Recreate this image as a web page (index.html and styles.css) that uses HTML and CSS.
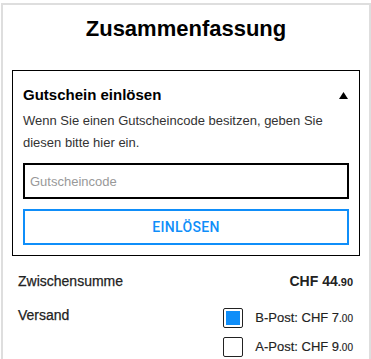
FILE: index.html
```html
<!DOCTYPE html>
<html lang="de">
<head>
    <meta charset="UTF-8">
    <title>Zusammenfassung</title>
    <link rel="stylesheet" href="styles.css">
</head>
<body>
  <!-- Warenkorb-Zusammenfassung -->
  <div class="summary">
    <h1>Zusammenfassung</h1>

    <!-- Gutschein -->
    <div class="voucher">
      <div class="voucher-head">
        <span>Gutschein einlösen</span>
        <svg class="arrow" width="9" height="7" viewBox="0 0 9 7"><polygon points="4.5,0 9,7 0,7" fill="#000"/></svg>
      </div>
      <p>Wenn Sie einen Gutscheincode besitzen, geben Sie diesen bitte hier ein.</p>
      <input type="text" placeholder="Gutscheincode">
      <button>EINLÖSEN</button>
    </div>

    <!-- Beträge -->
    <div class="row">
      <span class="label">Zwischensumme</span>
      <span class="price">CHF 44<small>.90</small></span>
    </div>

    <div class="row shipping">
      <span class="label">Versand</span>
      <div class="options">
        <label class="option">
          <span class="box checked"></span>
          <span>B-Post: CHF 7<small>.00</small></span>
        </label>
        <label class="option">
          <span class="box"></span>
          <span>A-Post: CHF 9<small>.00</small></span>
        </label>
      </div>
    </div>
  </div>
</body>
</html>
```

FILE: styles.css
```css
/* Grundlayout */
body {
    margin: 0;
    font-family: "Liberation Sans", Arial, sans-serif;
    background: #fff;
    color: #333;
}

/* Karte */
.summary {
    box-sizing: border-box;
    width: 370px;
    height: 356px;
    overflow: hidden;
    margin: 3px 0 0 1px;
    padding: 0 9px;
    border: 2px solid #dedede;
    border-bottom: none;
}

.summary h1 {
    font-size: 22px;
    line-height: 28px;
    text-align: center;
    color: #000;
    margin: 10px 0 27px;
}

/* Gutschein-Block */
.voucher {
    border: 1px solid #000;
    padding: 15px 10px 10px 10px;
}

.voucher-head {
    display: flex;
    justify-content: space-between;
    align-items: center;
    font-size: 15px;
    line-height: 18px;
    font-weight: bold;
    color: #000;
    padding-right: 1px;
}

.voucher p {
    font-size: 13px;
    line-height: 22px;
    margin: 6px 0 9px;
    color: #333;
}

.voucher input {
    display: block;
    box-sizing: border-box;
    width: 100%;
    height: 36px;
    border: 2px solid #000;
    padding: 0 5px;
    font-family: "Liberation Sans", Arial, sans-serif;
    font-size: 13px;
    outline: none;
}

.voucher input::placeholder {
    color: #999;
}

.voucher button {
    display: block;
    box-sizing: border-box;
    width: 100%;
    height: 36px;
    margin-top: 10px;
    border: 2px solid #0f8ef9;
    background: #fff;
    color: #0f8ef9;
    font-family: Roboto, sans-serif;
    font-weight: 500;
    font-size: 14px;
    letter-spacing: 0.3px;
    cursor: pointer;
}

/* Zeilen */
.row {
    display: flex;
    justify-content: space-between;
    align-items: flex-start;
    padding: 0 7px 0 6px;
    margin-top: 16px;
    font-size: 14px;
    line-height: 18px;
}

.row.shipping {
    margin-top: 15px;
}

.label {
    color: #222;
    -webkit-text-stroke: 0.25px #222;
}

.price {
    font-weight: bold;
    color: #222;
}

.price small {
    font-size: 11px;
}

.options {
    margin-top: 2px;
    display: flex;
    flex-direction: column;
    gap: 9px;
}

.option {
    display: flex;
    align-items: center;
    gap: 12px;
    font-size: 13px;
    color: #222;
    -webkit-text-stroke: 0.15px #222;
}

.option small {
    font-size: 10px;
}

.box {
    box-sizing: border-box;
    width: 20px;
    height: 20px;
    border: 1px solid #222;
    border-radius: 2px;
    padding: 2px;
    background: #fff;
    background-clip: content-box;
}

.box.checked {
    background: #0f8ef9;
    background-clip: content-box;
}
```
